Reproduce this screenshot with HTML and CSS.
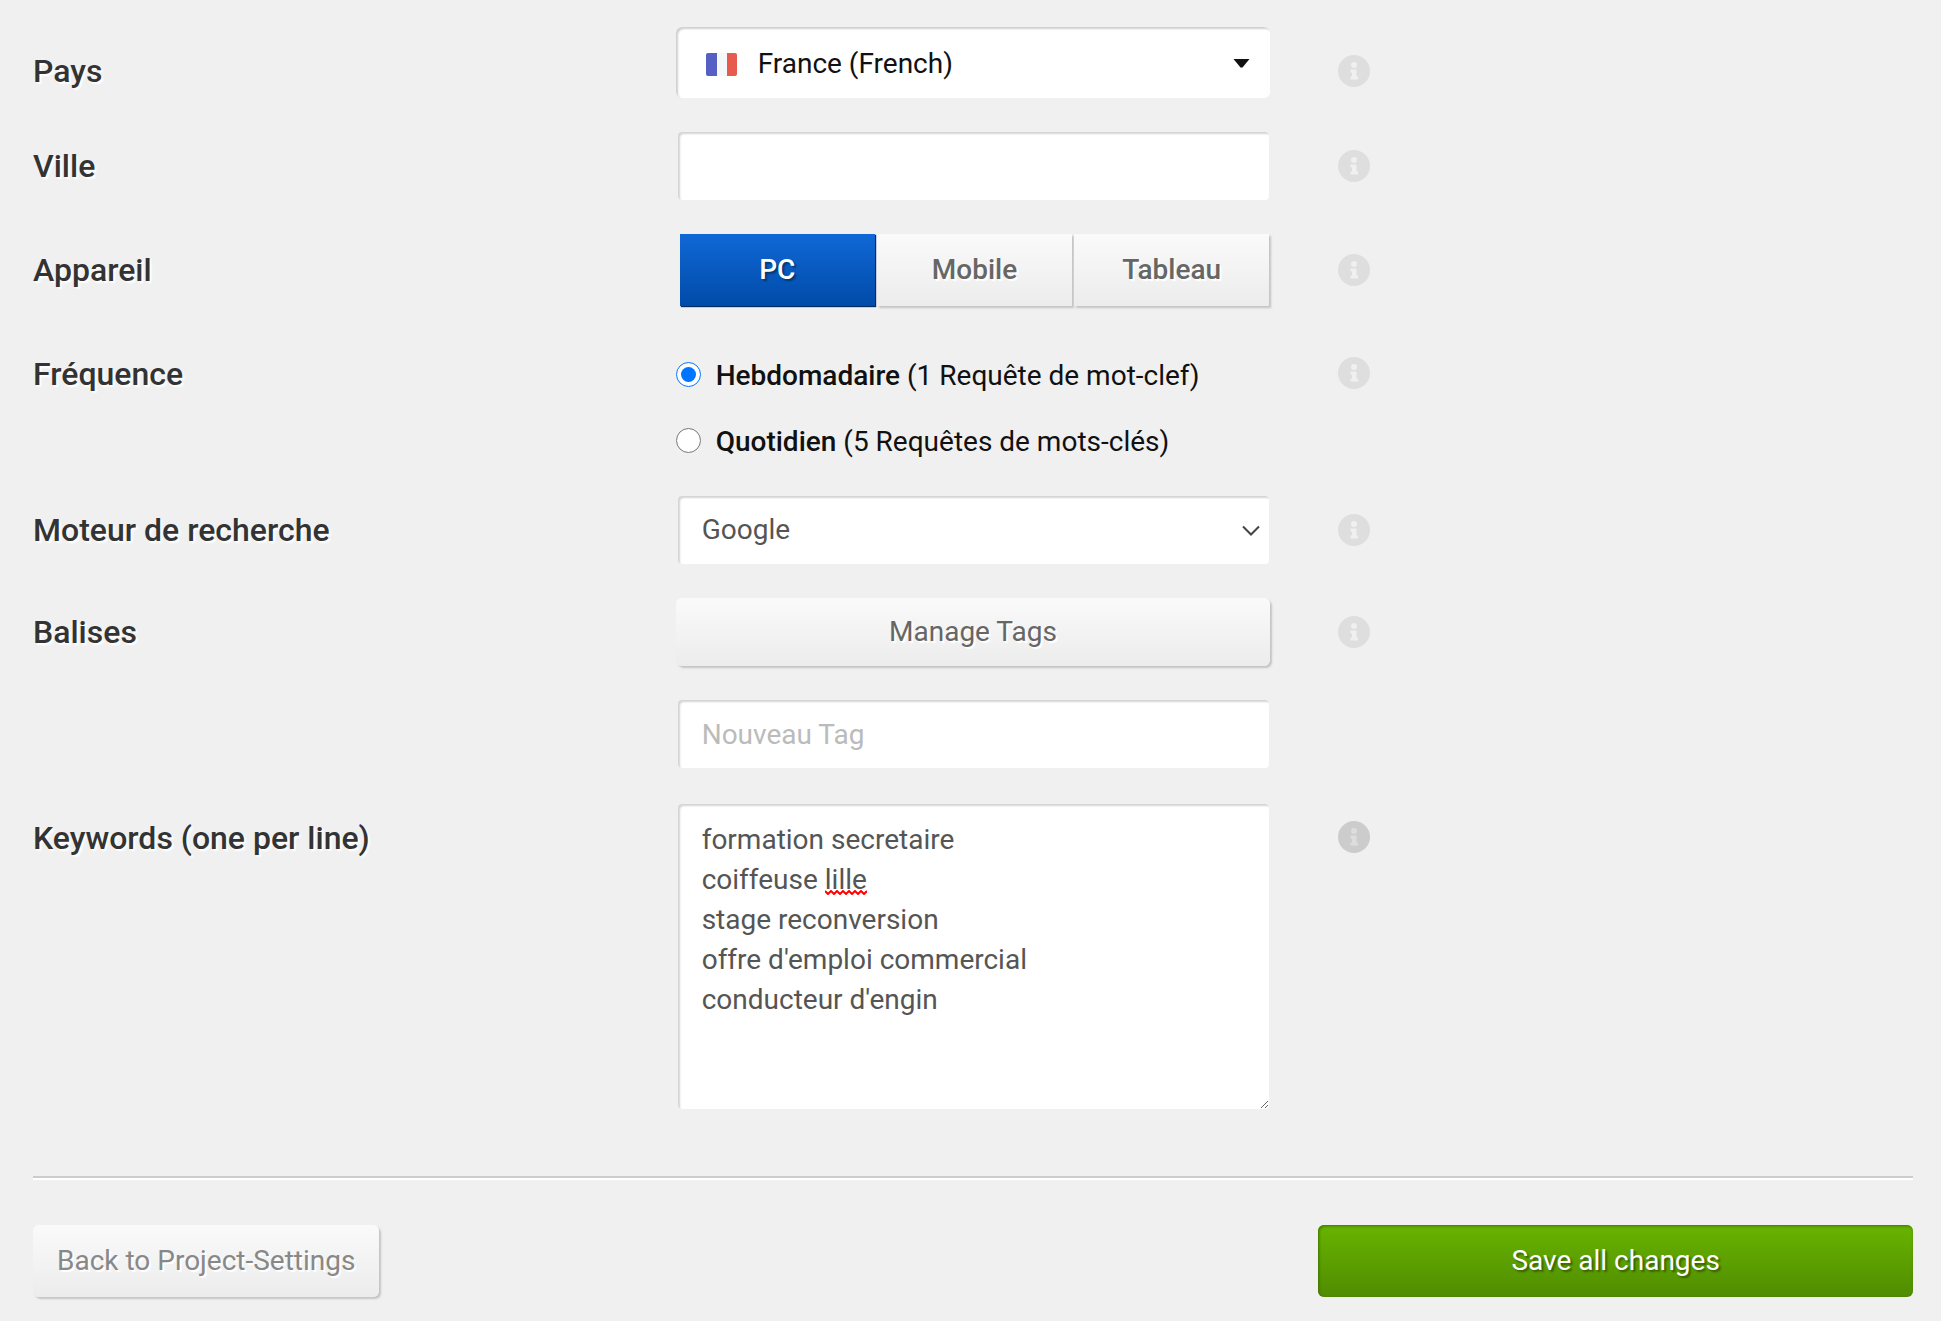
FILE: index.html
```html
<!DOCTYPE html>
<html lang="fr">
<head>
  <meta charset="UTF-8" />
  <meta name="viewport" content="width=device-width, initial-scale=1.0" />
  <title>Project Settings</title>
  <link rel="stylesheet" href="styles.css">
</head>
<body>
  <svg width="0" height="0" class="sprite" aria-hidden="true">
    <symbol id="icon-info" viewBox="0 0 32 32">
      <circle class="disc" cx="16" cy="16" r="16" />
      <circle class="mark" cx="16" cy="10" r="3" />
      <path class="mark" d="M12.500 14.500h6v7h1.500v3h-7.500v-3h1.500v-4h-1.500z" />
    </symbol>
  </svg>
  <form id="settings">
    <div class="row row-country">
      <label class="label" for="country">Pays</label>
      <div class="control country">
        <select id="country">
          <option>France (French)</option>
        </select>
        <svg class="flag" viewBox="0 0 31 23">
          <rect width="31" height="23" rx="2" fill="#f5f8f8" />
          <path d="M2 0h9v23H2a2 2 0 0 1-2-2V2a2 2 0 0 1 2-2z" fill="#5660c4" />
          <path d="M21 0h8a2 2 0 0 1 2 2v19a2 2 0 0 1-2 2h-8z" fill="#e65a50" />
        </svg>
        <svg class="caret" viewBox="0 0 17 9"><path d="M0.500 0h16L9.500 8.500h-2z" fill="#111" /></svg>
      </div>
      <svg class="info"><use href="#icon-info" /></svg>
    </div>
    <div class="row">
      <label class="label" for="city">Ville</label>
      <div class="control"><input class="field" type="text" id="city"></div>
      <svg class="info"><use href="#icon-info" /></svg>
    </div>
    <div class="row">
      <span class="label" id="device-label">Appareil</span>
      <div class="tabs" role="group" aria-labelledby="device-label">
        <button type="button" class="tab active">PC</button>
        <button type="button" class="tab">Mobile</button>
        <button type="button" class="tab">Tableau</button>
      </div>
      <svg class="info"><use href="#icon-info" /></svg>
    </div>
    <div class="row row-top">
      <span class="label" id="freq-label">Fréquence</span>
      <div class="options" role="radiogroup" aria-labelledby="freq-label">
        <label class="option"><input type="radio" name="freq" checked><span><b>Hebdomadaire</b> (1 Requête de mot-clef)</span></label>
        <label class="option"><input type="radio" name="freq"><span><b>Quotidien</b> (5 Requêtes de mots-clés)</span></label>
      </div>
      <svg class="info"><use href="#icon-info" /></svg>
    </div>
    <div class="row">
      <label class="label" for="engine">Moteur de recherche</label>
      <div class="control">
        <select class="field" id="engine">
          <option>Google</option>
        </select>
        <svg class="chevron" viewBox="0 0 18 11"><path d="M1 1.500l8 8 8-8" fill="none" stroke="#444" stroke-width="2" /></svg>
      </div>
      <svg class="info"><use href="#icon-info" /></svg>
    </div>
    <div class="row">
      <span class="label">Balises</span>
      <button type="button" class="btn btn-tags">Manage Tags</button>
      <svg class="info"><use href="#icon-info" /></svg>
    </div>
    <div class="row">
      <span></span>
      <div class="control"><input class="field" type="text" placeholder="Nouveau Tag" aria-label="Nouveau Tag"></div>
    </div>
    <div class="row row-top">
      <label class="label" for="keywords">Keywords (one per line)</label>
      <div class="control">
        <textarea class="field" id="keywords" spellcheck="false">formation secretaire
coiffeuse lille
stage reconversion
offre d'emploi commercial
conducteur d'engin</textarea>
        <svg class="squiggle" viewBox="0 0 42 5"><path d="M0 1l3 3 3-3 3 3 3-3 3 3 3-3 3 3 3-3 3 3 3-3 3 3 3-3 3 3 3-3" fill="none" stroke="#f00" stroke-width="2" /></svg>
      </div>
      <svg class="info info-dark"><use href="#icon-info" /></svg>
    </div>
    <hr>
    <div class="row actions">
      <button type="button" class="btn btn-back">Back to Project-Settings</button>
      <button type="submit" class="btn btn-save">Save all changes</button>
    </div>
  </form>
</body>
</html>
```
FILE: styles.css
```css
* {
  box-sizing: border-box;
  margin: 0;
  padding: 0;
}
body {
  background-color: #f0f0f0;
  color: #111;
  font-family: Roboto, "Liberation Sans", sans-serif;
  font-size: 28px;
  line-height: 40px;
}
.sprite {
  position: absolute;
}
input,
select,
textarea,
button {
  font: inherit;
}
#settings {
  display: flex;
  flex-direction: column;
  gap: 32px;
  padding: 27px 28px 24px 33px;
}
.row {
  display: grid;
  grid-template-columns: repeat(3, minmax(0, 1fr));
  column-gap: 48px;
  align-items: center;
}
.row-top {
  align-items: start;
}
.label {
  font-size: 32px;
  font-weight: 500;
  color: #333;
  text-shadow: 2px 2px 2px #fff;
}
.row-country .label,
.row-country .info,
.row-top .label {
  margin-top: 16px;
}
.info {
  width: 32px;
  height: 32px;
  margin-left: 20px;
  fill: #f0f0f0;
}
.row-top .info {
  margin-top: 19px;
}
.disc {
  fill: #dedede;
}
.info-dark {
  filter: brightness(0.92);
}
.control {
  position: relative;
  padding: 2px 1px 2px 2px;
}
.field {
  display: block;
  width: 100%;
  height: 68px;
  padding: 0 24px;
  border: 0;
  border-radius: 4px;
  background-color: #fff;
  color: #555;
  box-shadow: inset 2px 2px 2px #d4d4d4;
}
.field::placeholder {
  color: #bbb;
}
select {
  appearance: none;
}
textarea.field {
  height: 305px;
  padding-top: 16px;
  resize: vertical;
}
.country {
  padding: 0;
}
.country select {
  display: block;
  width: 100%;
  height: 71px;
  padding: 2px 40px 0 82px;
  border: 0;
  border-radius: 6px;
  background-color: #fff;
  color: #111;
  box-shadow: inset 2px 2px 2px #d0d0d0;
}
.flag,
.caret,
.chevron,
.squiggle {
  position: absolute;
  pointer-events: none;
}
.flag {
  left: 30px;
  top: 26px;
  width: 31px;
  height: 23px;
}
.caret {
  right: 20px;
  top: 32px;
  width: 17px;
  height: 9px;
}
.chevron {
  right: 10px;
  top: 31px;
  width: 18px;
  height: 11px;
}
.squiggle {
  left: 149px;
  top: 88px;
  width: 42px;
  height: 5px;
}
.tabs {
  display: flex;
  gap: 2px;
  padding: 0 1px 0 4px;
}
.tab {
  flex: 1;
  height: 72px;
  border: 0;
  background: linear-gradient(#fafafa, #ececec);
  color: #666;
  font-weight: 500;
  text-shadow: 2px 2px 1px #fff;
  box-shadow: 2px 2px 2px #c4c4c4;
}
.tab.active {
  background: linear-gradient(#1068d6, #004ba8);
  color: #fff;
  text-shadow: 2px 2px 2px rgba(0, 0, 0, 0.4);
  box-shadow: 1px 1px 1px #002a66;
}
.options {
  display: flex;
  flex-direction: column;
  gap: 26px;
  padding: 18px 0 0;
}
.option {
  display: flex;
  align-items: start;
  gap: 15px;
}
.option input {
  width: 25px;
  height: 25px;
  margin-top: 6px;
}
.option b {
  font-weight: 500;
}
.btn {
  border: 0;
  border-radius: 6px;
  background: linear-gradient(#fafafa, #ececec);
  color: #666;
  text-shadow: 2px 2px 1px #fff;
  box-shadow: 2px 2px 2px #c4c4c4;
}
.btn-tags {
  height: 68px;
}
hr {
  height: 4px;
  margin-top: 33px;
  border: 0;
  border-top: 2px solid #ccc;
  background-color: #fff;
}
.actions {
  margin-top: 13px;
}
.actions .btn {
  height: 72px;
}
.btn-back {
  justify-self: start;
  padding: 0 24px;
  color: #888;
}
.btn-save {
  grid-column: 3;
  background: linear-gradient(#68b400, #508c00);
  color: #fff;
  text-shadow: 2px 2px 2px rgba(0, 0, 0, 0.4);
  box-shadow: inset 1px 1px 3px #3f7000;
}
```
